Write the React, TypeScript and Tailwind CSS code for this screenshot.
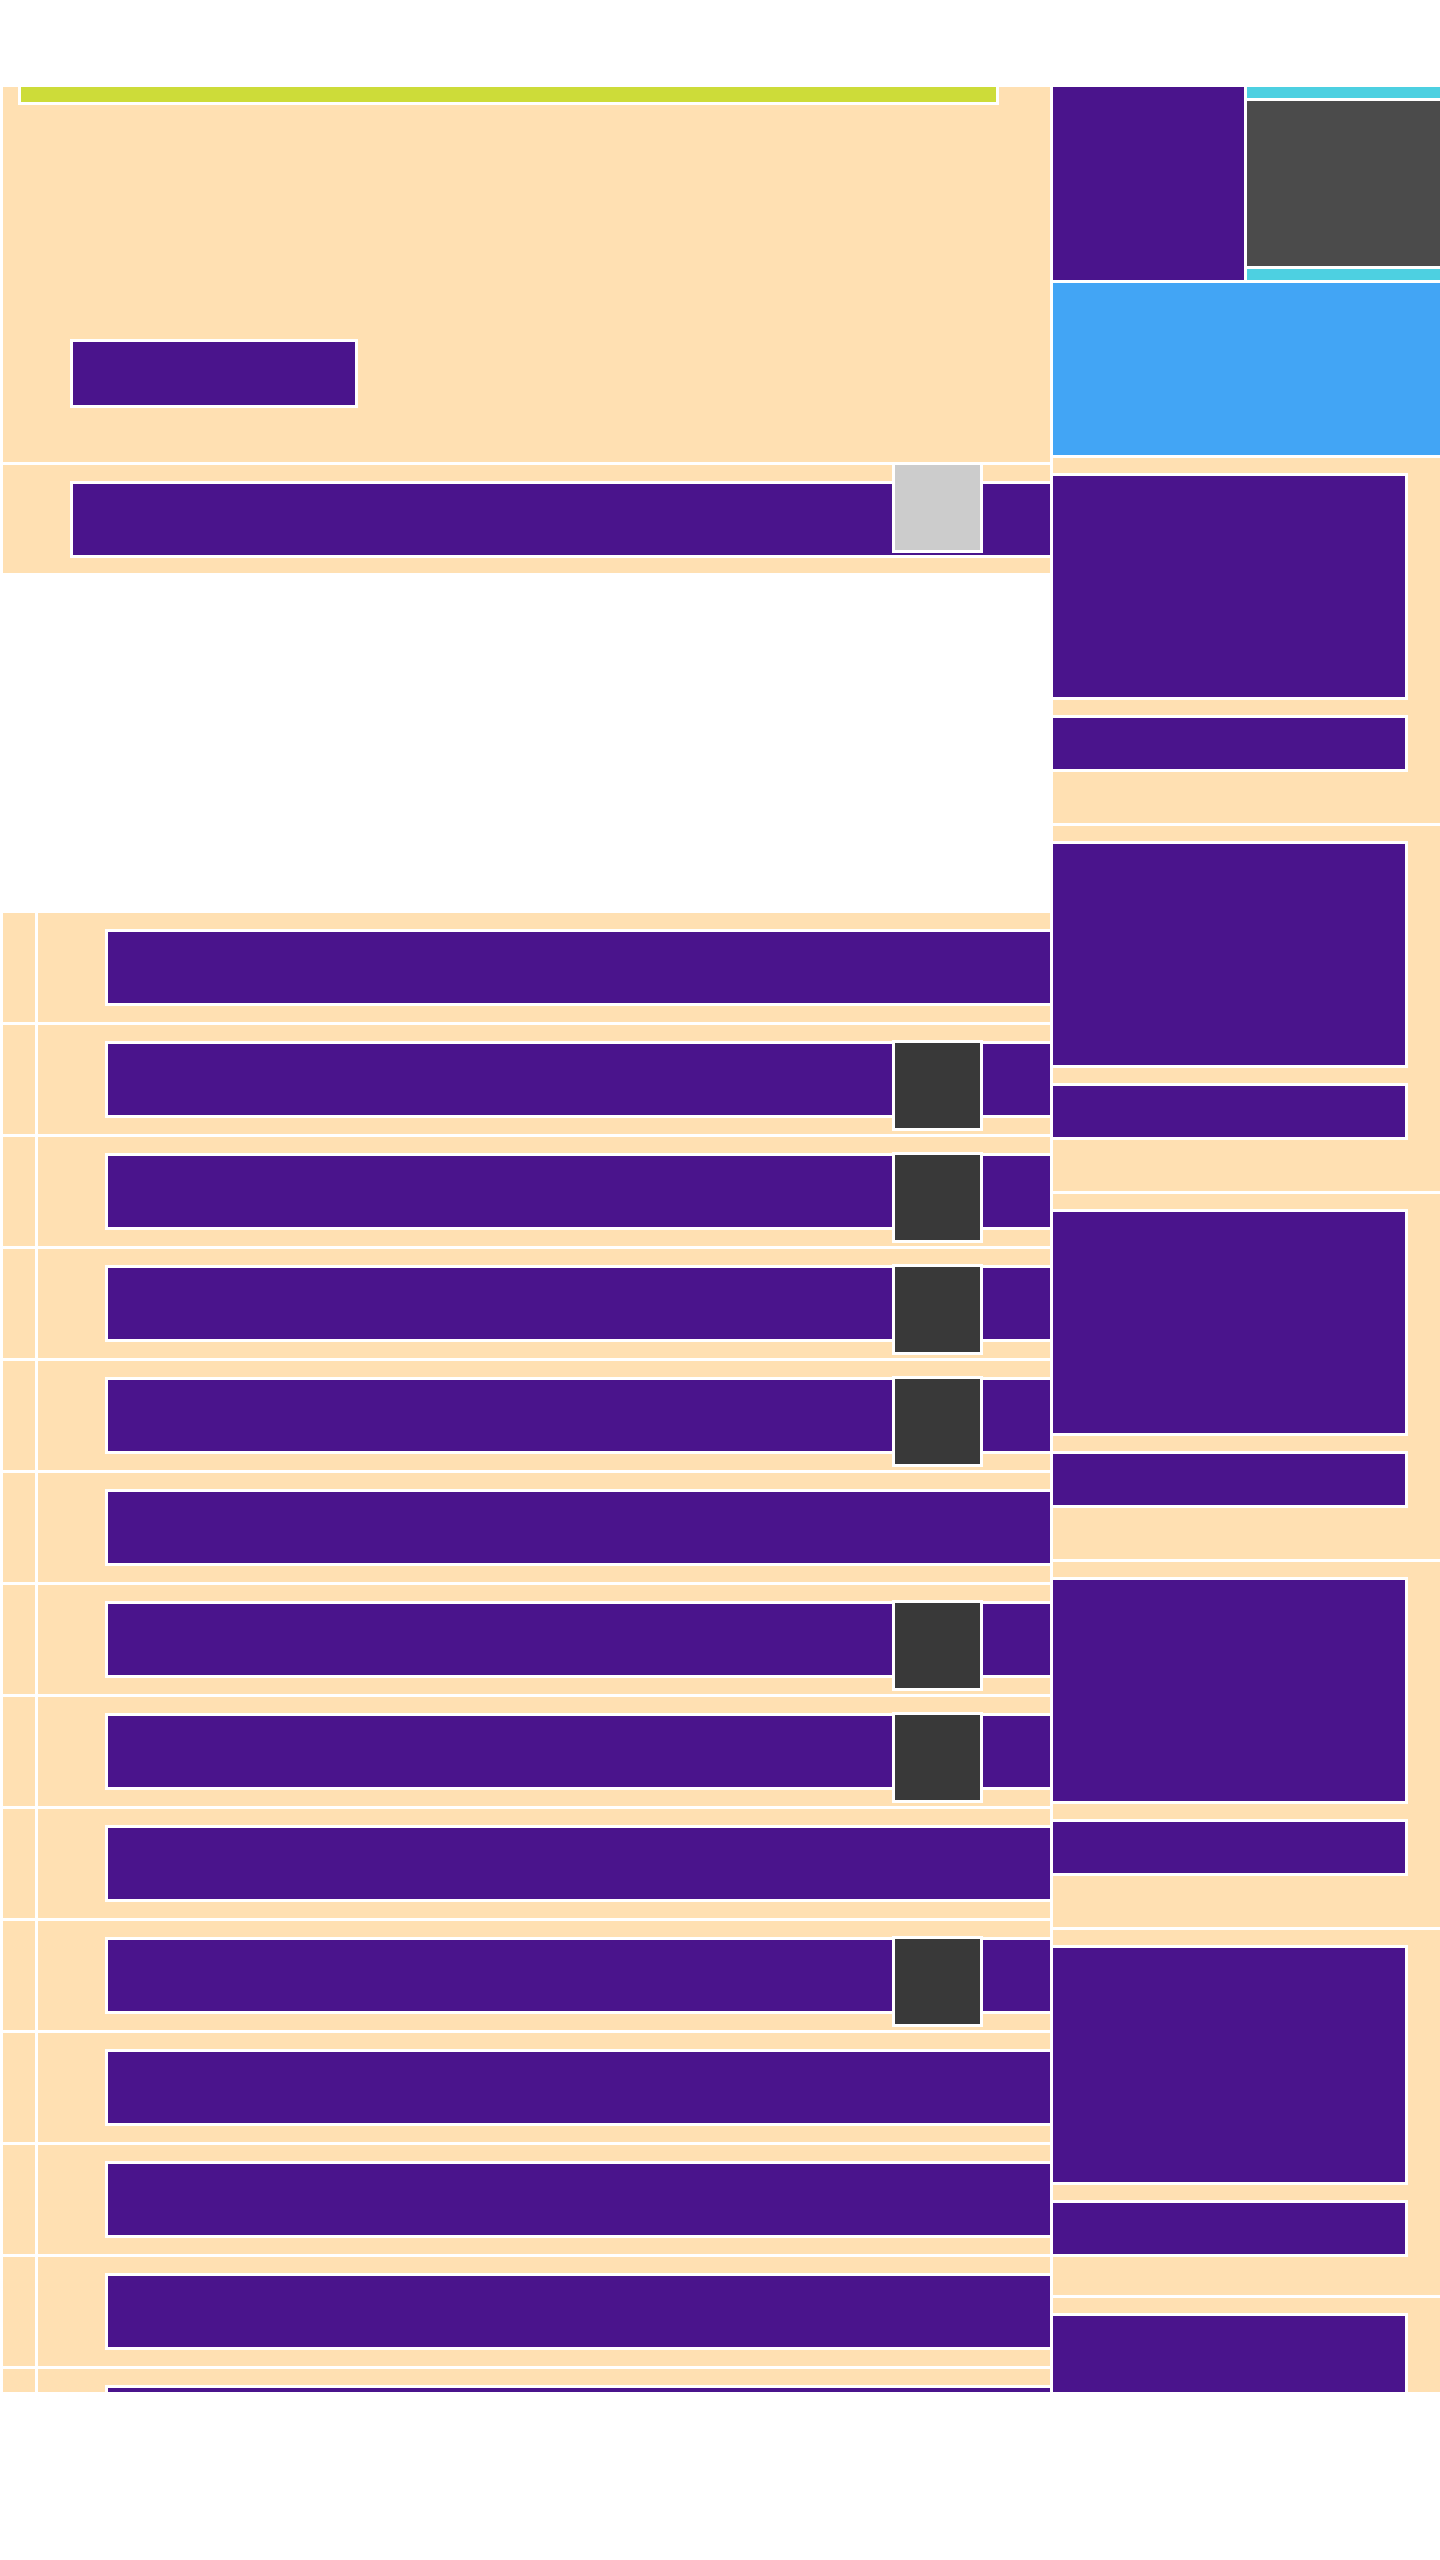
const rows = [false, true, true, true, true, false, true, true, false, true, false, false, false, false];
const cards = ["h-[227px]", "h-[227px]", "h-[227px]", "h-[227px]", "h-[240px]", "h-[227px]"];

function Row({ thumb }: { thumb: boolean }) {
  return (
    <div className="mt-[3px] flex h-[109px] gap-[3px]">
      <div className="w-[32px] bg-[#ffe0b2]" />
      <div className="relative flex-1 bg-[#ffe0b2] pl-[67px] pt-[16px]">
        <div className="h-[77px] border-[3px] border-r-0 border-white bg-[#4a148c]" />
        {thumb && (
          <div className="absolute left-[854px] top-[15px] h-[91px] w-[91px] border-[3px] border-white bg-[#393939]" />
        )}
      </div>
    </div>
  );
}

function Card({ h }: { h: string }) {
  return (
    <div className="mt-[3px] h-[365px] bg-[#ffe0b2] pt-[15px]">
      <div className={"w-[355px] border-y-[3px] border-r-[3px] border-white bg-[#4a148c] " + h} />
      <div className="mt-[15px] h-[57px] w-[355px] border-y-[3px] border-r-[3px] border-white bg-[#4a148c]" />
    </div>
  );
}

export default function App() {
  return (
    <div className="min-h-screen bg-white">
      <div className="h-[87px]" />
      <div className="flex h-[2305px] overflow-hidden">
        {/* left column */}
        <div className="w-[1050px] shrink-0 pl-[3px]">
          <div className="flex h-[375px] flex-col bg-[#ffe0b2]">
            <div className="ml-[15px] h-[18px] w-[981px] border-[3px] border-t-0 border-white bg-[#cddc39]" />
            <div className="ml-[67px] mt-[234px] h-[69px] w-[288px] border-[3px] border-white bg-[#4a148c]" />
          </div>

          <div className="relative mt-[3px] h-[108px] bg-[#ffe0b2] pl-[67px] pt-[16px]">
            <div className="h-[77px] border-[3px] border-r-0 border-white bg-[#4a148c]" />
            <div className="absolute left-[889px] top-[-3px] h-[91px] w-[91px] border-[3px] border-white bg-[#cccccc]" />
          </div>

          <div className="h-[337px]" />

          {rows.map((t, i) => (
            <Row key={i} thumb={t} />
          ))}
        </div>

        {/* right column */}
        <div className="ml-[3px] flex-1">
          <div className="flex h-[193px] gap-[3px]">
            <div className="w-[191px] bg-[#4a148c]" />
            <div className="flex flex-1 flex-col justify-center bg-[#4dd0e1]">
              <div className="h-[171px] border-y-[3px] border-white bg-[#4b4b4b]" />
            </div>
          </div>
          <div className="mt-[3px] h-[172px] bg-[#42a5f5]" />
          {cards.map((h, i) => (
            <Card key={i} h={h} />
          ))}
        </div>
      </div>
    </div>
  );
}
